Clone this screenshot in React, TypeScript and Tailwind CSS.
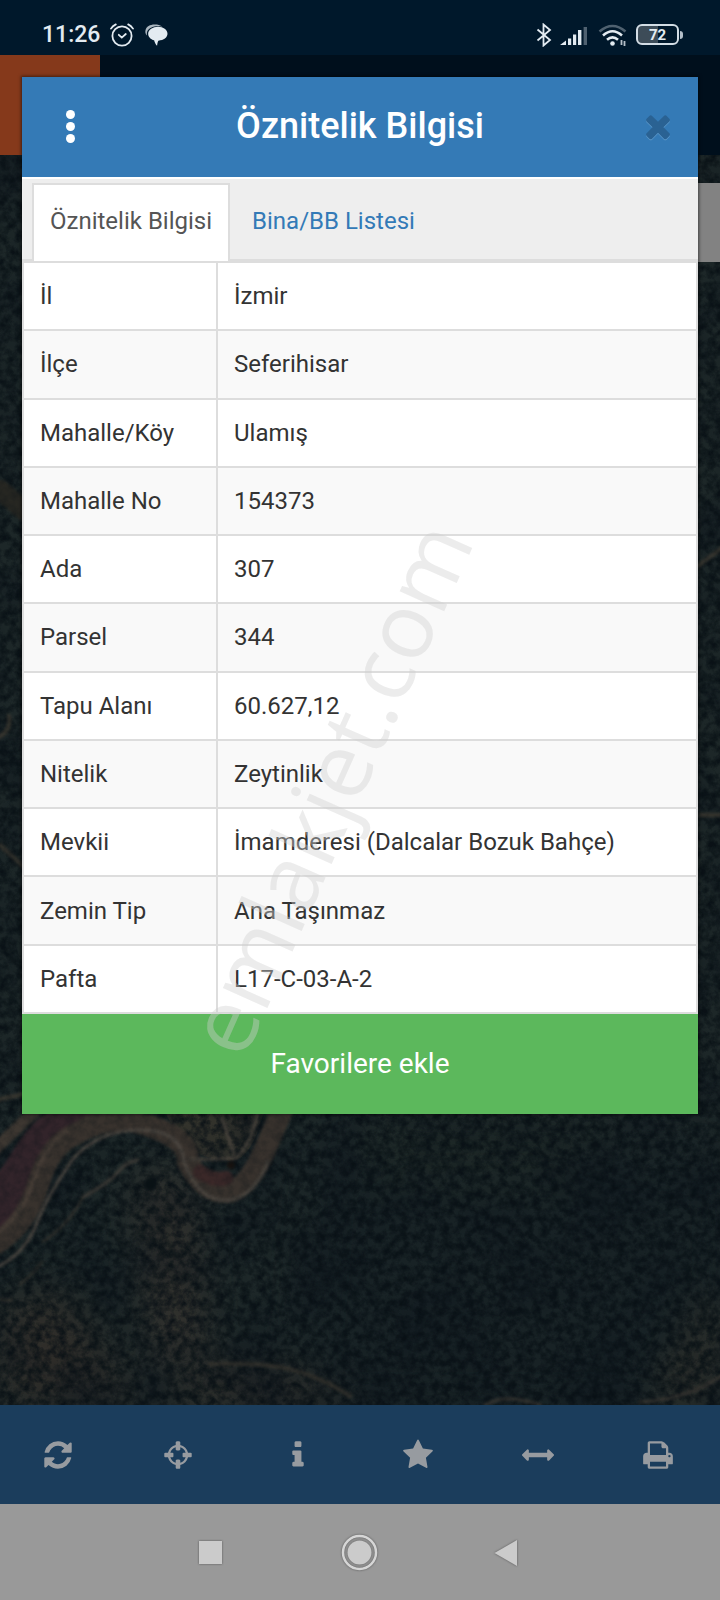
import { useState } from "react";
import type { ReactNode } from "react";

const rows = [
  ["İl", "İzmir"],
  ["İlçe", "Seferihisar"],
  ["Mahalle/Köy", "Ulamış"],
  ["Mahalle No", "154373"],
  ["Ada", "307"],
  ["Parsel", "344"],
  ["Tapu Alanı", "60.627,12"],
  ["Nitelik", "Zeytinlik"],
  ["Mevkii", "İmamderesi (Dalcalar Bozuk Bahçe)"],
  ["Zemin Tip", "Ana Taşınmaz"],
  ["Pafta", "L17-C-03-A-2"],
];

const tools = [
  {
    label: "Yenile",
    path: "M1639 1056q0 5-1 7-64 268-268 434.5t-478 166.5q-146 0-282.5-55t-243.5-157l-129 129q-19 19-45 19t-45-19-19-45v-448q0-26 19-45t45-19h448q26 0 45 19t19 45-19 45l-137 137q71 66 161 102t187 36q134 0 250-65t186-179q11-17 53-117 8-23 30-23h192q13 0 22.5 9.5t9.5 22.5zm25-800v448q0 26-19 45t-45 19h-448q-26 0-45-19t-19-45 19-45l138-138q-148-137-349-137-134 0-250 65t-186 179q-11 17-53 117-8 23-30 23h-199q-13 0-22.5-9.5t-9.5-22.5v-7q65-268 270-434.5t480-166.5q146 0 284 55.5t245 156.5l130-129q19-19 45-19t45 19 19 45z",
  },
  {
    label: "Konum",
    path: "M1325 1024h-109q-26 0-45-19t-19-45v-128q0-26 19-45t45-19h109q-32-108-112.5-188.5t-188.5-112.5v109q0 26-19 45t-45 19h-128q-26 0-45-19t-19-45v-109q-108 32-188.5 112.5t-112.5 188.5h109q26 0 45 19t19 45v128q0 26-19 45t-45 19h-109q32 108 112.5 188.5t188.5 112.5v-109q0-26 19-45t45-19h128q26 0 45 19t19 45v109q108-32 188.5-112.5t112.5-188.5zm339-192v128q0 26-19 45t-45 19h-143q-37 161-154.5 278.5t-278.5 154.5v143q0 26-19 45t-45 19h-128q-26 0-45-19t-19-45v-143q-161-37-278.5-154.5t-154.5-278.5h-143q-26 0-45-19t-19-45v-128q0-26 19-45t45-19h143q37-161 154.5-278.5t278.5-154.5v-143q0-26 19-45t45-19h128q26 0 45 19t19 45v143q161 37 278.5 154.5t154.5 278.5h143q26 0 45 19t19 45z",
  },
  {
    label: "Bilgi",
    path: "M1216 1344v128q0 26-19 45t-45 19h-512q-26 0-45-19t-19-45v-128q0-26 19-45t45-19h64v-384h-64q-26 0-45-19t-19-45v-128q0-26 19-45t45-19h384q26 0 45 19t19 45v576h64q26 0 45 19t19 45zm-128-1152v192q0 26-19 45t-45 19h-256q-26 0-45-19t-19-45v-192q0-26 19-45t45-19h256q26 0 45 19t19 45z",
  },
  {
    label: "Favoriler",
    path: "M1728 647q0 22-26 48l-363 354 86 500q1 7 1 20 0 21-10.5 35.5t-30.5 14.5q-19 0-40-12l-449-236-449 236q-22 12-40 12-21 0-31.5-14.5t-10.5-35.5q0-6 2-20l86-500-364-354q-25-27-25-48 0-37 56-46l502-73 225-455q19-41 49-41t49 41l225 455 502 73q56 9 56 46z",
  },
  {
    label: "Ölçüm",
    path: "M1792 896q0 26-19 45l-256 256q-19 19-45 19t-45-19-19-45v-128h-1024v128q0 26-19 45t-45 19-45-19l-256-256q-19-19-19-45t19-45l256-256q19-19 45-19t45 19 19 45v128h1024v-128q0-26 19-45t45-19 45 19l256 256q19 19 19 45z",
  },
  {
    label: "Yazdır",
    path: "M448 1536h896v-256h-896v256zm0-640h896v-384h-160q-40 0-68-28t-28-68v-160h-640v640zm1152 64q0-26-19-45t-45-19-45 19-19 45 19 45 45 19 45-19 19-45zm128 0v416q0 13-9.5 22.5t-22.5 9.5h-224v160q0 40-28 68t-68 28h-960q-40 0-68-28t-28-68v-160h-224q-13 0-22.5-9.5t-9.5-22.5v-416q0-79 56.5-135.5t135.5-56.5h64v-544q0-40 28-68t68-28h672q40 0 88 20t76 48l152 152q28 28 48 76t20 88v256h64q79 0 135.5 56.5t56.5 135.5z",
  },
];

const timesPath =
  "M1490 1322q0 40-28 68l-136 136q-28 28-68 28t-68-28l-294-294-294 294q-28 28-68 28t-68-28l-136-136q-28-28-28-68t28-68l294-294-294-294q-28-28-28-68t28-68l136-136q28-28 68-28t68 28l294 294 294-294q28-28 68-28t68 28l136 136q28 28 28 68t-28 68l-294 294 294 294q28 28 28 68z";

const StatusBar = () => (
  <div className="h-[55px] shrink-0 bg-[#00182b] pt-3.5 pl-[42px] pr-[37px] flex items-center justify-between text-[#e3ebf1]">
    <div className="flex items-center gap-2.5">
      <span className="text-[23px] leading-7 font-medium">11:26</span>
      <svg className="w-6 h-6" viewBox="0 0 24 24" fill="none" stroke="currentColor" strokeWidth="1.8" strokeLinecap="round">
        <circle cx="12" cy="13" r="9.6" />
        <path d="M1 5.6Q2.600 3 5.800 1.400M23 5.600Q21.400 3 18.200 1.400" />
        <path d="M8.800 11.800l3 2.800 4-3.600" />
      </svg>
      <svg className="w-6 h-6" viewBox="-1 0 23 22" fill="currentColor">
        <path d="M12.500 3C7.500 3 3 5.800 3 9.800c0 3 2.300 5.400 5.700 6.300.4 2 1.500 4 2.800 5.300.3-1.700.4-3.400 1.200-5C18 16 21.500 13.400 21.500 9.800c0-4-4-6.800-9-6.800z" />
        <path d="M1.800 11.500C.6 10.200 0 8.400.4 6.600 1.200 3 4.700 1 9.200 1c3 0 5.500.6 7.400 2-6.500-1.400-13.200.4-14.600 4.900-.3 1.200-.4 2.400-.2 3.600z" opacity=".75" />
      </svg>
    </div>
    <div className="flex items-center gap-2">
      <svg className="w-4 h-6" viewBox="0 0 16 24" fill="none" stroke="currentColor" strokeWidth="1.800">
        <path d="M1.500 6.500L14 17l-6.500 5.500V1.500L14 7 1.500 17.500" />
      </svg>
      <svg className="w-[30px] h-6" viewBox="1 0 30 24" fill="currentColor">
        <path d="M1 22l6-4.500v4.500zM9 15.500h3.200v6.500H9zM14 11.500h3.200V22H14zM19 7h3.400v15H19z" />
        <path d="M24.600 4H28v18h-3.400z" opacity=".35" />
      </svg>
      <svg className="w-[30px] h-6" viewBox="0 0 30 24" fill="none" stroke="currentColor" strokeWidth="2.600">
        <path d="M1.500 8.500Q14.500-2.500 27.500 8.500" opacity=".35" />
        <path d="M5 12.500Q14.500 4 24 12.500M9 16.800Q14.500 12 20 16.800" />
        <circle cx="14.500" cy="20.500" r="2.300" fill="currentColor" stroke="none" />
        <path d="M23.500 17v5M26.500 18v5" strokeWidth="1.800" opacity=".8" />
      </svg>
      <div className="flex items-center">
        <span className="w-[43px] h-[21px] rounded-md border-2 border-[#d3dde5] bg-linear-to-r from-[#3d4c58] from-50% to-transparent to-50% flex items-center justify-center text-[15px] leading-4 font-bold">
          72
        </span>
        <span className="w-[3px] h-2 ml-px rounded-r bg-[#b4bfc9]" />
      </div>
    </div>
  </div>
);

// Darkened aerial view: the dirt tracks sit on a soft base, with tree noise over both
const SatelliteMap = () => (
  <svg className="flex-1 w-full min-h-0" viewBox="0 155 720 1250" preserveAspectRatio="xMidYMid slice" aria-hidden="true">
    <defs>
      <filter id="grain" x="0" y="0" width="100%" height="100%" colorInterpolationFilters="sRGB">
        <feTurbulence type="fractalNoise" baseFrequency=".12" numOctaves="4" seed="7" />
        <feColorMatrix values="0 0 0 0 .03  0 0 0 0 .06  0 0 0 0 .08  2.200 0 0 0 -.75" />
      </filter>
      <filter id="patches" x="0" y="0" width="100%" height="100%" colorInterpolationFilters="sRGB">
        <feTurbulence type="fractalNoise" baseFrequency=".014" numOctaves="3" seed="4" />
        <feColorMatrix values="0 0 0 0 .05  0 0 0 0 .08  0 0 0 0 .11  0 2.500 0 0 -1" />
      </filter>
      <filter id="soft" colorInterpolationFilters="sRGB"><feGaussianBlur stdDeviation="1.600" /></filter>
      <filter id="haze" x="-30%" y="-30%" width="160%" height="160%" colorInterpolationFilters="sRGB"><feGaussianBlur stdDeviation="20" /></filter>
    </defs>
    <rect y="155" width="720" height="1250" fill="#1d2728" />
    <g filter="url(#haze)">
      <path d="M320 1160q170-30 410 0v250H300z" fill="#182225" />
      <path d="M0 1310L60 1290 140 1405H0z" fill="#302e2a" />
      <path d="M138 1175h52l16 190h-52z" fill="#34322e" />
      <path d="M150 1405q70-60 180-15l40 15z" fill="#322f2b" />
      <path d="M650 1405l70-130v130z" fill="#2f302b" />
      <path d="M370 1125h220v60H370z" fill="#1d2726" />
    </g>
    <path d="M160 1105h105q-10 50-32 56-38-2-50-20t-23-36z" fill="#33332c" />
    <rect y="155" width="720" height="1250" filter="url(#patches)" opacity=".45" />
    <rect y="155" width="720" height="1250" filter="url(#grain)" opacity=".8" />
    <g filter="url(#soft)" fill="none" strokeLinecap="round">
      <path d="M-10 1215Q14 1190 32 1160T85 1112" stroke="#32242a" strokeWidth="42" />
      <path d="M-8 1152L36 1110" stroke="#3d3731" strokeWidth="12" />
      <path d="M-8 1246Q26 1226 38 1185T76 1134Q110 1112 150 1126T188 1162Q204 1192 225 1192T264 1152L284 1105" stroke="#38322d" strokeWidth="22" />
      <path d="M-5 1234Q22 1216 34 1180T66 1132" stroke="#463d36" strokeWidth="4" />
      <path d="M-5 1268Q24 1255 36 1225T72 1160Q98 1130 140 1130T184 1162Q198 1200 225 1200T268 1162" stroke="#4c4741" strokeWidth="3" />
      <path d="M190 1159q22 1 46-1 14-12 22-45M222 1118l12 36" stroke="#48433c" strokeWidth="3" />
      <path d="M200 1172q14 10 26 6" stroke="#3a2828" strokeWidth="14" />
      <path d="M138 1160q-12 2-20 12t-35 25" stroke="#403d38" strokeWidth="3" />
      <path d="M83 1197q-12 25-40 45M42 1262q-12 16-22 22M0 1300h12" stroke="#33312c" strokeWidth="2" />
      <path d="M210 1364q60-2 90 8t50 24" stroke="#32312c" strokeWidth="4" />
      <path d="M485 1405q20-12 55 0M640 1402q50-2 90-32" stroke="#363430" strokeWidth="3" />
      <path d="M695 568l30-22M-5 738q16-4 14-22M0 845l24 22M700 815h20M-5 1100l30-6" stroke="#38362f" strokeWidth="4" />
      <path d="M0 490l24 20" stroke="#272722" strokeWidth="20" />
      <circle cx="231" cy="1165" r="4" fill="#17120f" />
      <circle cx="150" cy="1184" r="6" fill="#0a1215" />
    </g>
    <rect y="155" width="720" height="1250" filter="url(#grain)" opacity=".25" />
  </svg>
);

const Toolbar = () => (
  <div className="h-[99px] shrink-0 bg-[#1b3d5c] grid grid-cols-6">
    {tools.map((tool) => (
      <button key={tool.label} aria-label={tool.label} className="pr-1 flex items-center justify-center text-[#979ba0]">
        <svg className="w-8 h-8" viewBox="0 0 1792 1792" fill="currentColor">
          <path d={tool.path} />
        </svg>
      </button>
    ))}
  </div>
);

const NavButton = ({ label, children }: { label: string; children: ReactNode }) => (
  <button aria-label={label}>
    <svg className="w-10 h-10 drop-shadow-[0_0_1px_#555]" viewBox="0 0 40 40" fill="#cbcbcb">
      {children}
    </svg>
  </button>
);

const NavBar = () => (
  <div className="h-24 shrink-0 bg-[#999] flex items-center justify-center gap-[108px]">
    <NavButton label="Son uygulamalar">
      <path d="M7 9h23v23H7z" />
    </NavButton>
    <NavButton label="Ana ekran">
      <circle cx="19.500" cy="20.500" r="12" />
      <circle cx="19.500" cy="20.500" r="16.500" fill="none" stroke="#d6d6d6" strokeWidth="2.500" />
    </NavButton>
    <NavButton label="Geri">
      <path d="M6.500 21L29 8v26z" />
    </NavButton>
  </div>
);

const tabs = ["Öznitelik Bilgisi", "Bina/BB Listesi"];

const ParcelDialog = () => {
  const [active, setActive] = useState(tabs[0]);

  return (
    <div role="dialog" aria-labelledby="dialog-title" className="absolute inset-x-[22px] top-[77px] bg-white shadow-[0_0_3px_1px_rgba(0,0,0,0.5)]">
      <div className="h-[100px] px-[22px] pb-0.5 bg-[#347ab6] flex items-center justify-between">
        <button aria-label="Menü" className="w-[52px] h-12 flex flex-col items-center justify-center gap-[3px]">
          <span className="w-[9px] h-[9px] rounded-full bg-white" />
          <span className="w-[9px] h-[9px] rounded-full bg-white" />
          <span className="w-[9px] h-[9px] rounded-full bg-white" />
        </button>
        <h1 id="dialog-title" className="text-4xl font-medium text-white">Öznitelik Bilgisi</h1>
        <button aria-label="Kapat" className="w-[52px] h-12 flex items-center justify-end text-[#2a6293]">
          <svg className="w-9 h-9 shrink-0 drop-shadow-[0_1px_0_#5b97c9]" viewBox="0 0 1792 1792" fill="currentColor">
            <path d={timesPath} />
          </svg>
        </button>
      </div>
      <div role="tablist" className="border-t-2 border-white bg-[#eee] pt-1 px-2.5 flex shadow-[inset_0_-2px_0_#ddd]">
        {tabs.map((tab) => (
          <button
            key={tab}
            role="tab"
            aria-selected={tab === active}
            onClick={() => setActive(tab)}
            className={
              tab === active
                ? "h-[78px] px-4 pb-1 border-2 border-b-0 border-[#ddd] bg-white text-2xl text-[#555]"
                : "h-[78px] px-[22px] pb-0.5 text-2xl text-[#337ab7]"
            }
          >
            {tab}
          </button>
        ))}
      </div>
      <table className="w-full h-[753px] table-fixed border-collapse text-2xl text-[#333]">
        <tbody>
          {rows.map(([name, value]) => (
            <tr key={name} className="even:bg-[#f9f9f9]">
              <th scope="row" className="w-[194px] border-2 border-[#ddd] px-4 font-normal text-left">{name}</th>
              <td className="border-2 border-[#ddd] px-4">{value}</td>
            </tr>
          ))}
        </tbody>
      </table>
      <button className="w-full h-[100px] bg-[#5cb85c] text-[28px] text-white">Favorilere ekle</button>
      <div className="absolute inset-0 flex items-center justify-center pointer-events-none overflow-hidden">
        <span className="mt-96 mr-16 -rotate-66 whitespace-nowrap font-['Open_Sans',sans-serif] text-[91px] leading-none text-[#cfcfcf]/40">
          emlakjet.com
        </span>
      </div>
    </div>
  );
};

const App = () => (
  <div className="relative min-h-screen flex flex-col bg-[#10191a] font-[Roboto,sans-serif]">
    <StatusBar />
    <div className="h-[100px] shrink-0 bg-[#000f1c]">
      <div className="w-[100px] h-full bg-[#85391b]" />
    </div>
    <SatelliteMap />
    <Toolbar />
    <NavBar />
    <div className="absolute right-0 top-[183px] w-24 h-[79px] bg-[#828282]" />
    <ParcelDialog />
  </div>
);

export default App;
